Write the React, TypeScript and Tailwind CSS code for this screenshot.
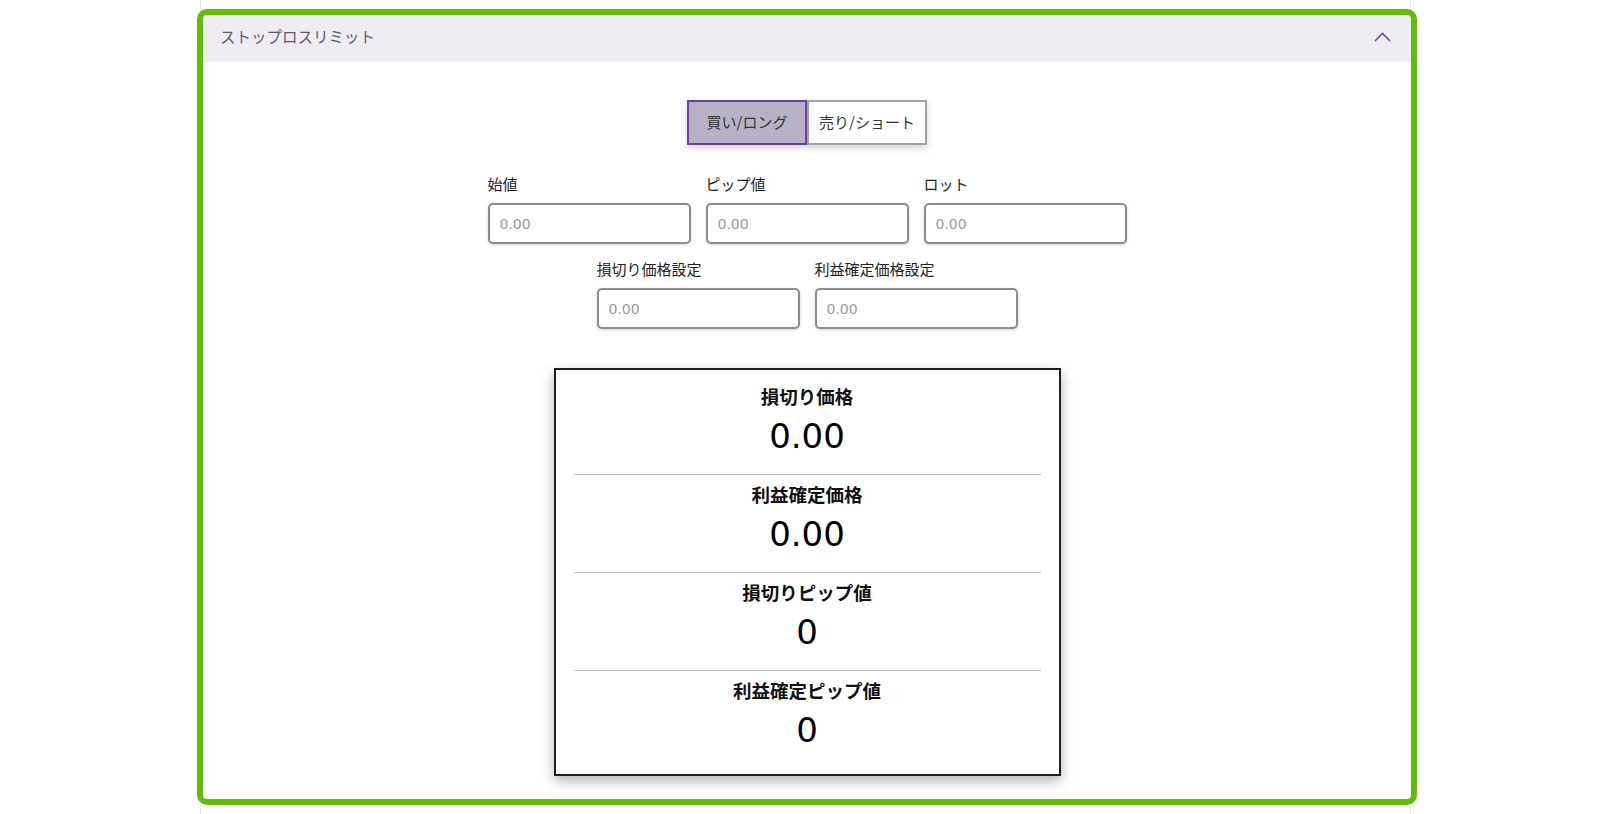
import { useState } from "react";

const jp = "font-['Noto_Sans_CJK_JP','Noto_Sans',sans-serif]";
const num = "font-['DejaVu_Sans','Noto_Sans',sans-serif]";

function Field({ label }: { label: string }) {
    return (
        <div className="flex flex-col w-[203px]">
            <label className={`${jp} text-[15px] leading-[20px] text-[#222]`}>{label}</label>
            <input
                type="text"
                placeholder="0.00"
                className={`${num} mt-[9px] h-[41px] w-full rounded-[5px] border-2 border-[#8c8c8c] bg-white px-[10px] text-[14px] text-[#333] placeholder:text-[#9a9a9a] shadow-[0_1px_3px_rgba(0,0,0,0.18)] outline-none`}
            />
        </div>
    );
}

function Result({ label, value, last }: { label: string; value: string; last?: boolean }) {
    return (
        <div className={`flex flex-col items-center pt-[7px] pb-[14px] ${last ? "" : "border-b border-[#bdbdbd]"}`}>
            <div className={`${jp} text-[18.5px] leading-[24px] font-bold text-[#111]`}>{label}</div>
            <div className={`${num} mt-[4px] text-[34px] leading-[48px] text-black`}>{value}</div>
        </div>
    );
}

export default function App() {
    const [side, setSide] = useState<"long" | "short">("long");

    return (
        <div className="min-h-screen bg-white">
            <div className="ml-[200px] w-[1211px] min-h-[814px] border-x border-[#e3e3e3] pt-[15px]">
                <section className="ml-[2px] w-[1208px] rounded-[4px] outline-[6px] outline-solid outline-[#62bb04] bg-white">
                    {/* accordion header */}
                    <div className="flex h-[47px] items-center justify-between bg-[#eeebf3] pl-[17px] pr-[20px]">
                        <span className={`${jp} -mt-[3px] text-[15.5px] text-[#5e5872]`}>ストップロスリミット</span>
                        <svg width="17" height="10" viewBox="0 0 17 10" fill="none" className="-mt-[4px]">
                            <path d="M1 9 L8.5 1.5 L16 9" stroke="#6a4fa0" strokeWidth="1.6" />
                        </svg>
                    </div>

                    <div className="flex flex-col items-center pt-[38px] pb-[23px]">
                        {/* buy / sell toggle */}
                        <div className="flex shadow-[0_3px_8px_rgba(0,0,0,0.18)]">
                            <button
                                onClick={() => setSide("long")}
                                className={`${jp} h-[45px] w-[120px] border-2 text-[15px] text-[#333] ${side === "long" ? "border-[#6b3fa6] bg-[#b7b0c7]" : "border-[#a3a3a3] bg-white"}`}
                            >
                                買い/ロング
                            </button>
                            <button
                                onClick={() => setSide("short")}
                                className={`${jp} h-[45px] w-[120px] border-2 text-[15px] text-[#333] ${side === "short" ? "border-[#6b3fa6] bg-[#b7b0c7]" : "border-[#a3a3a3] bg-white"}`}
                            >
                                売り/ショート
                            </button>
                        </div>

                        <div className="mt-[29px] flex gap-[15px]">
                            <Field label="始値" />
                            <Field label="ピップ値" />
                            <Field label="ロット" />
                        </div>
                        <div className="mt-[15px] flex gap-[15px]">
                            <Field label="損切り価格設定" />
                            <Field label="利益確定価格設定" />
                        </div>

                        {/* results */}
                        <div className="mt-[39px] w-[507px] border-2 border-[#1e1e1e] bg-white px-[18px] pt-[7px] pb-[6px] shadow-[0_5px_12px_rgba(0,0,0,0.3)]">
                            <Result label="損切り価格" value="0.00" />
                            <Result label="利益確定価格" value="0.00" />
                            <Result label="損切りピップ値" value="0" />
                            <Result label="利益確定ピップ値" value="0" last />
                        </div>
                    </div>
                </section>
            </div>
        </div>
    );
}
